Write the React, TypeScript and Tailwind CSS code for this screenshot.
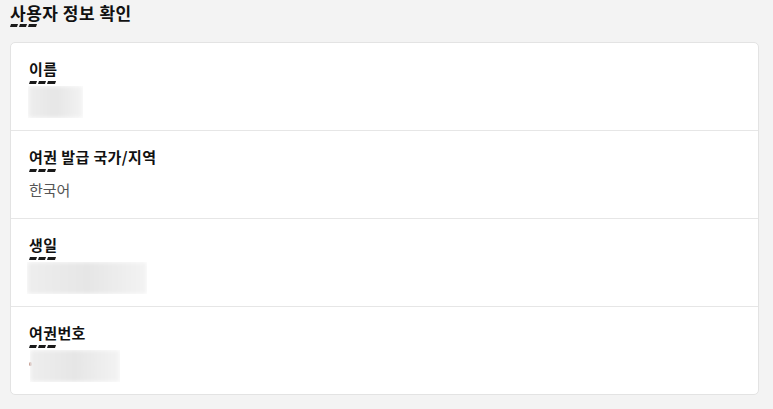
const font = { fontFamily: '"Noto Sans CJK KR", "Noto Sans", sans-serif' };

function Dashes() {
  return (
    <svg width="27" height="3" viewBox="0 0 27 3" className="block" aria-hidden>
      <polygon points="1,0 8,0 7,3 0,3" fill="#1a1a1a" />
      <polygon points="10,0 17,0 16,3 9,3" fill="#1a1a1a" />
      <polygon points="19,0 27,0 26,3 18,3" fill="#1a1a1a" />
    </svg>
  );
}

function Blurred({ width, offset = 0, dot = false }: { width: number; offset?: number; dot?: boolean }) {
  return (
    <div className="relative h-5">
      {dot && <span className="absolute left-0 top-[6px] h-[4px] w-[3px] rounded-full bg-[#c9a49a]" />}
      <div
        className="absolute -top-[6px] h-[32px] overflow-hidden"
        style={{ width, left: offset }}
      >
        <div className="h-full w-full bg-gradient-to-r from-[#eeeeee] via-[#e6e6e6] to-[#f3f3f3] blur-[2px]" />
      </div>
    </div>
  );
}

type Row = { label: string; value?: string; blur?: { width: number; offset?: number; dot?: boolean } };

const rows: Row[] = [
  { label: "이름", blur: { width: 55, offset: -1 } },
  { label: "여권 발급 국가/지역", value: "한국어" },
  { label: "생일", blur: { width: 120, offset: -2 } },
  { label: "여권번호", blur: { width: 90, offset: 1, dot: true } },
];

export default function App() {
  return (
    <div className="min-h-[409px] w-[773px] bg-[#f3f3f3] px-[10px] pt-[2px]" style={font}>
      <h1 className="text-[17px] font-bold leading-[21px] tracking-[0.5px] text-[#111]">사용자 정보 확인</h1>
      <div className="mt-[1px]">
        <Dashes />
      </div>
      <div className="mt-[15px] w-[749px] rounded-[5px] border border-[#e3e3e3] bg-white">
        {rows.map((r, i) => (
          <div
            key={r.label}
            className={`px-[18px] pt-4 pb-[18px] ${i < rows.length - 1 ? "border-b border-[#e6e6e6]" : ""}`}
          >
            <div className="text-[15px] font-bold leading-5 tracking-[0.4px] text-[#111]">{r.label}</div>
            <div className="mt-[2px]">
              <Dashes />
            </div>
            <div className="mt-2">
              {r.value ? (
                <div className="text-[15px] leading-5 text-[#555]">{r.value}</div>
              ) : (
                <Blurred {...r.blur!} />
              )}
            </div>
          </div>
        ))}
      </div>
    </div>
  );
}
